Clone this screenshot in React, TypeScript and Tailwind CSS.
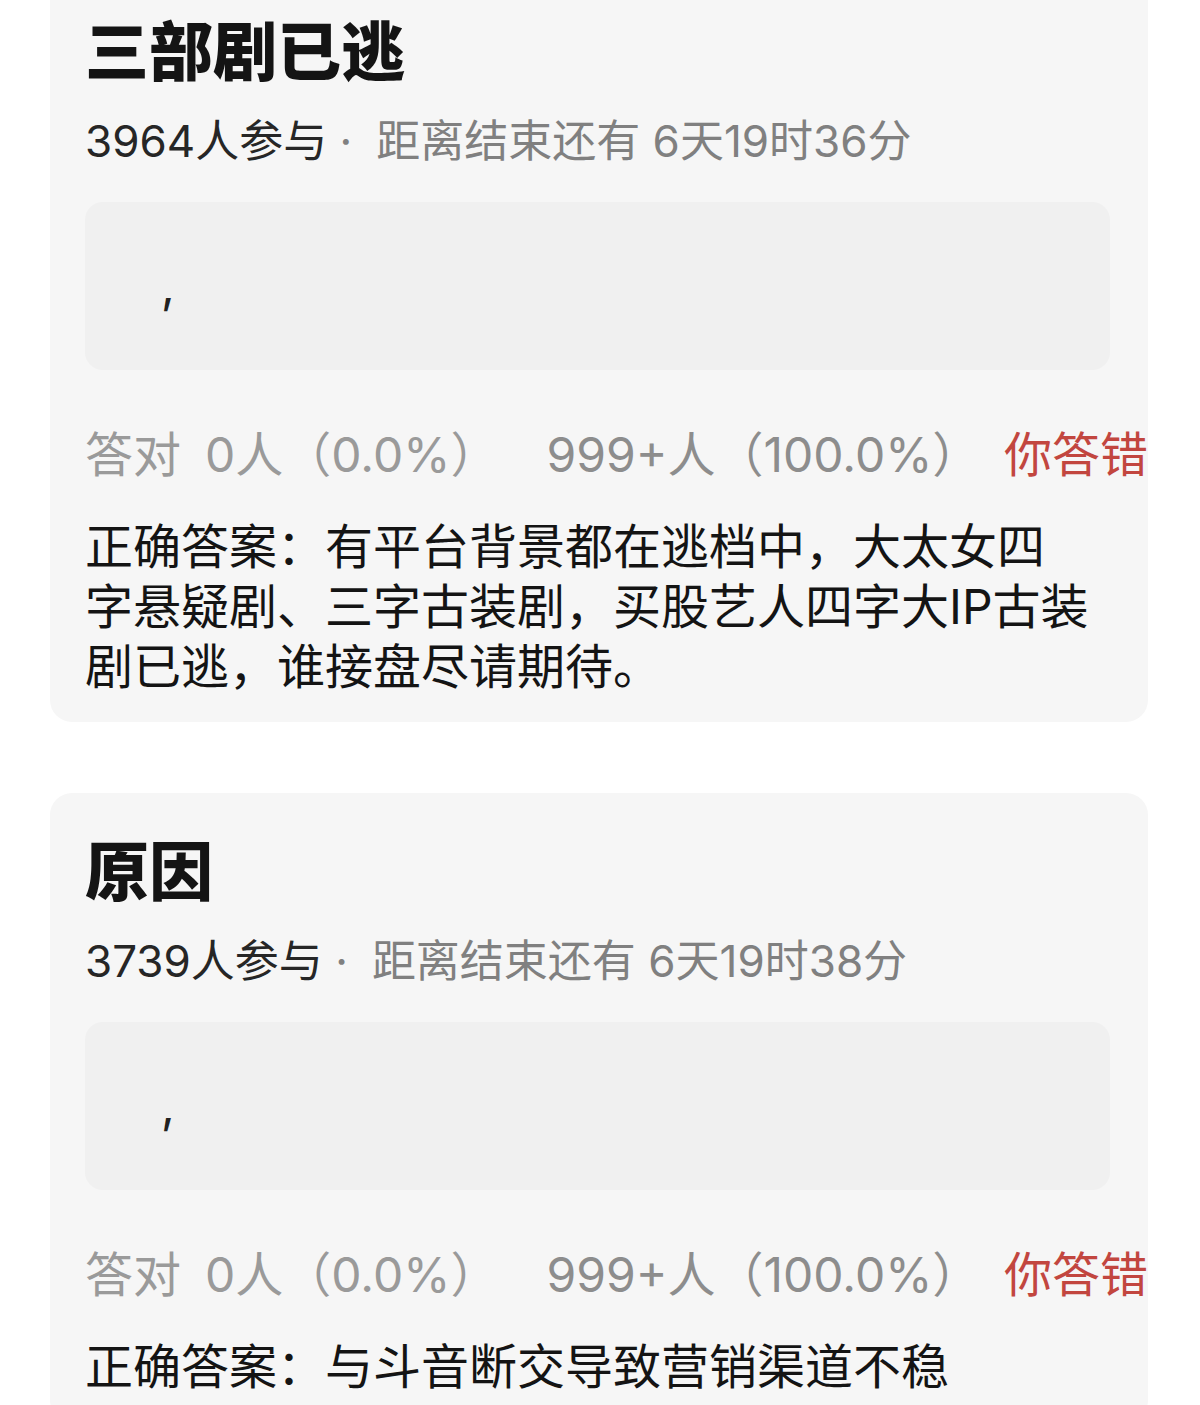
const FONT = "font-['Inter','Noto_Sans_CJK_SC','Noto_Sans',sans-serif]";

type Poll = {
  title: string;
  joined: number;
  remain: string;
  answer: string[];
};

const polls: Poll[] = [
  {
    title: "三部剧已逃",
    joined: 3964,
    remain: "6天19时36分",
    answer: [
      "正确答案：有平台背景都在逃档中，大太女四",
      "字悬疑剧、三字古装剧，买股艺人四字大IP古装",
      "剧已逃，谁接盘尽请期待。",
    ],
  },
  {
    title: "原因",
    joined: 3739,
    remain: "6天19时38分",
    answer: ["正确答案：与斗音断交导致营销渠道不稳"],
  },
];

function PollCard({ poll }: { poll: Poll }) {
  return (
    <section className="rounded-[22px] bg-[#f6f6f6] pt-[40px] pb-[25px] pl-[35px] pr-[38px]">
      <h2 className="text-[64px] leading-[77px] font-black text-[#141414]">{poll.title}</h2>
      <p className="mt-[22px] text-[44px] leading-[58px] whitespace-nowrap">
        <span className="text-[#262626]">{poll.joined}人参与</span>
        <span className="text-[#808080]"> ·</span>
        <span className="ml-[24px] text-[#808080]">距离结束还有 {poll.remain}</span>
      </p>

      {/* option placeholder, only a stray comma left in it */}
      <div className="mt-[32px] h-[168px] rounded-[18px] bg-[#f0f0f0] flex items-center pl-[76px]">
        <span className="text-[48px] leading-none text-[#222]">,</span>
      </div>

      <div className="mt-[54px] -mr-[38px] flex items-baseline text-[48px] leading-[62px] whitespace-nowrap text-[#9a9a9a]">
        <span>答对</span>
        <span className="ml-[24px]">0人（0.0%）</span>
        <span className="ml-[48px] text-[#8d8d8d]">999+人（100.0%）</span>
        <span className="ml-auto text-[#c2463f]">你答错</span>
      </div>

      <p className="mt-[31px] text-[48px] leading-[60px] text-[#141414]">
        {poll.answer.map((line) => (
          <span key={line} className="block whitespace-nowrap">
            {line}
          </span>
        ))}
      </p>
    </section>
  );
}

export default function App() {
  return (
    <div className={`h-[1405px] overflow-hidden bg-white ${FONT}`}>
      <div className="-mt-[27px] pl-[50px] pr-[52px] flex flex-col gap-[71px]">
        {polls.map((p) => (
          <PollCard key={p.title} poll={p} />
        ))}
      </div>
    </div>
  );
}
